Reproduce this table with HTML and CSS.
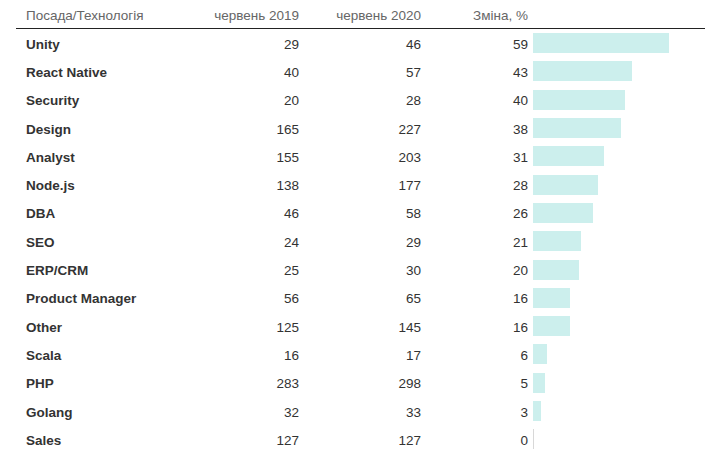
FILE: index.html
```html
<!DOCTYPE html>
<html lang="uk">
<head>
<meta charset="utf-8">
<link rel="stylesheet" href="styles.css">
</head>
<body>
<div class="table">
  <div class="row head">
    <div class="name">Посада/Технологія</div>
    <div class="num">червень 2019</div>
    <div class="num">червень 2020</div>
    <div class="num chg">Зміна, %</div>
    <div class="barcell"></div>
  </div>
  <div class="row"><div class="name">Unity</div><div class="num">29</div><div class="num">46</div><div class="num chg">59</div><div class="barcell"><div class="bar" style="width:136px"></div></div></div>
  <div class="row"><div class="name">React Native</div><div class="num">40</div><div class="num">57</div><div class="num chg">43</div><div class="barcell"><div class="bar" style="width:99px"></div></div></div>
  <div class="row"><div class="name">Security</div><div class="num">20</div><div class="num">28</div><div class="num chg">40</div><div class="barcell"><div class="bar" style="width:92px"></div></div></div>
  <div class="row"><div class="name">Design</div><div class="num">165</div><div class="num">227</div><div class="num chg">38</div><div class="barcell"><div class="bar" style="width:88px"></div></div></div>
  <div class="row"><div class="name">Analyst</div><div class="num">155</div><div class="num">203</div><div class="num chg">31</div><div class="barcell"><div class="bar" style="width:71px"></div></div></div>
  <div class="row"><div class="name">Node.js</div><div class="num">138</div><div class="num">177</div><div class="num chg">28</div><div class="barcell"><div class="bar" style="width:65px"></div></div></div>
  <div class="row"><div class="name">DBA</div><div class="num">46</div><div class="num">58</div><div class="num chg">26</div><div class="barcell"><div class="bar" style="width:60px"></div></div></div>
  <div class="row"><div class="name">SEO</div><div class="num">24</div><div class="num">29</div><div class="num chg">21</div><div class="barcell"><div class="bar" style="width:48px"></div></div></div>
  <div class="row"><div class="name">ERP/CRM</div><div class="num">25</div><div class="num">30</div><div class="num chg">20</div><div class="barcell"><div class="bar" style="width:46px"></div></div></div>
  <div class="row"><div class="name">Product Manager</div><div class="num">56</div><div class="num">65</div><div class="num chg">16</div><div class="barcell"><div class="bar" style="width:37px"></div></div></div>
  <div class="row"><div class="name">Other</div><div class="num">125</div><div class="num">145</div><div class="num chg">16</div><div class="barcell"><div class="bar" style="width:37px"></div></div></div>
  <div class="row"><div class="name">Scala</div><div class="num">16</div><div class="num">17</div><div class="num chg">6</div><div class="barcell"><div class="bar" style="width:14px"></div></div></div>
  <div class="row"><div class="name">PHP</div><div class="num">283</div><div class="num">298</div><div class="num chg">5</div><div class="barcell"><div class="bar" style="width:12px"></div></div></div>
  <div class="row"><div class="name">Golang</div><div class="num">32</div><div class="num">33</div><div class="num chg">3</div><div class="barcell"><div class="bar" style="width:8px"></div></div></div>
  <div class="row"><div class="name">Sales</div><div class="num">127</div><div class="num">127</div><div class="num chg">0</div><div class="barcell"><div class="bar zero"></div></div></div>
</div>
</body>
</html>
```
FILE: styles.css
```css
html, body {
  margin: 0;
  padding: 0;
  background: #fff;
}
body {
  font-family: "Liberation Sans", Arial, sans-serif;
  font-size: 13.5px;
  color: #333;
}
.table {
  margin-left: 16px;
  width: 689px;
}
.row {
  display: grid;
  grid-template-columns: 173px 110px 122px 107px 177px;
  align-items: center;
  height: 28.3px;
}
.row.head {
  height: 28px;
  border-bottom: 1px solid #222;
  color: #666;
}
.name,
.num {
  padding-top: 2px;
  white-space: nowrap;
}
.name {
  padding-left: 10px;
  font-weight: bold;
}
.head .name {
  font-weight: normal;
}
.num {
  text-align: right;
}
.barcell {
  padding-left: 5px;
  display: flex;
  align-items: center;
}
.bar {
  height: 20px;
  background: #ccefed;
}
.bar.zero {
  width: 1px;
  background: #d8d8d8;
}
```
